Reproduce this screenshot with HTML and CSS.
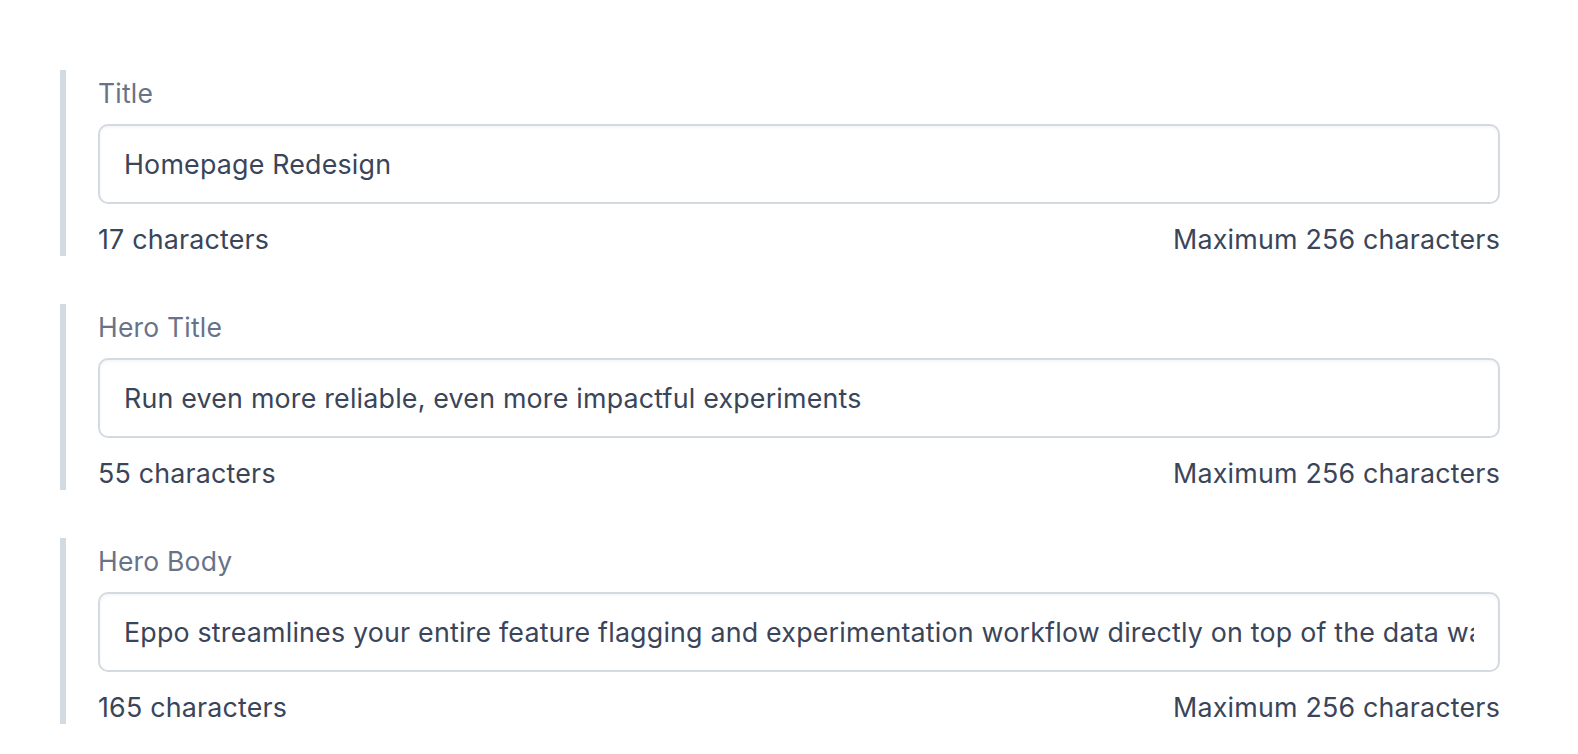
FILE: index.html
```html
<!DOCTYPE html>
<html lang="en">
<head>
    <meta charset="UTF-8">
    <meta name="viewport" content="width=device-width, initial-scale=1.0">
    <title>Content Fields</title>
    <link rel="stylesheet" href="styles.css">
</head>
<body>
    <div class="fields">
        <div class="field">
            <label class="field-label" for="title">Title</label>
            <input class="field-input" id="title" type="text" value="Homepage Redesign">
            <div class="field-meta">
                <span>17 characters</span>
                <span>Maximum 256 characters</span>
            </div>
        </div>
        <div class="field">
            <label class="field-label" for="heroTitle">Hero Title</label>
            <input class="field-input" id="heroTitle" type="text" value="Run even more reliable, even more impactful experiments">
            <div class="field-meta">
                <span>55 characters</span>
                <span>Maximum 256 characters</span>
            </div>
        </div>
        <div class="field">
            <label class="field-label" for="heroBody">Hero Body</label>
            <input class="field-input" id="heroBody" type="text" value="Eppo streamlines your entire feature flagging and experimentation workflow directly on top of the data warehouse, so every team can run trustworthy experiments.">
            <div class="field-meta">
                <span>165 characters</span>
                <span>Maximum 256 characters</span>
            </div>
        </div>
    </div>
</body>
</html>
```

FILE: styles.css
```css
* {
    margin: 0;
    padding: 0;
    box-sizing: border-box;
    font-family: Inter, "Noto Sans", sans-serif;
}

body {
    background: #ffffff;
    color: #3a4559;
}

.fields {
    display: flex;
    flex-direction: column;
    gap: 48px;
    padding: 70px 78px 0 60px;
}

.field {
    display: flex;
    flex-direction: column;
    border-left: 6px solid #d2dae2;
    padding-left: 32px;
    height: 186px;
}

.field-label {
    font-size: 26.5px;
    line-height: 34px;
    margin-top: 6px;
    color: #687388;
    letter-spacing: 0.2px;
}

.field-input {
    margin-top: 14px;
    height: 80px;
    width: 100%;
    border: 2px solid #d3dae2;
    border-radius: 10px;
    padding: 0 24px;
    font-size: 26.8px;
    letter-spacing: 0.2px;
    color: #3a4559;
    background: #fff;
    box-shadow: inset 0 2px 3px rgba(16, 24, 40, 0.04);
    outline: none;
}

.field-meta {
    display: flex;
    justify-content: space-between;
    margin-top: 18px;
    font-size: 26.8px;
    letter-spacing: 0.2px;
    line-height: 34px;
    color: #3a4559;
}
```
